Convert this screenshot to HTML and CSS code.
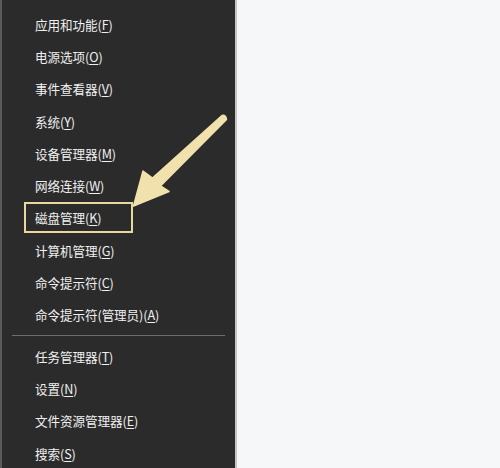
FILE: index.html
```html
<!DOCTYPE html>
<html lang="zh-CN">
<head>
  <meta charset="UTF-8">
  <title>快速链接菜单</title>
  <link rel="stylesheet" href="styles.css">
</head>
<body>
  <div class="screen">
    <ul class="menu">
      <li>应用和功能(<u>F</u>)</li>
      <li>电源选项(<u>O</u>)</li>
      <li>事件查看器(<u>V</u>)</li>
      <li>系统(<u>Y</u>)</li>
      <li>设备管理器(<u>M</u>)</li>
      <li>网络连接(<u>W</u>)</li>
      <li><span class="mark">磁盘管理(<u>K</u>)</span></li>
      <li>计算机管理(<u>G</u>)</li>
      <li>命令提示符(<u>C</u>)</li>
      <li>命令提示符(管理员)(<u>A</u>)</li>
      <li class="sep"></li>
      <li>任务管理器(<u>T</u>)</li>
      <li>设置(<u>N</u>)</li>
      <li>文件资源管理器(<u>E</u>)</li>
      <li>搜索(<u>S</u>)</li>
    </ul>
    <div class="blank"></div>

    <svg class="arrow" width="500" height="468" viewBox="0 0 500 468">
      <path d="M222 115.5 Q226 114.5 226.5 119.5 L160.5 186 L169 191.5 L133.5 206 L143 171 L152.5 178 Z"
            fill="#f1e2ad" stroke="#f1e2ad" stroke-width="1.5" stroke-linejoin="round"/>
    </svg>
  </div>
</body>
</html>
```

FILE: styles.css
```css
* { box-sizing: border-box; }
body {
  margin: 0;
  font-family: "Noto Sans CJK SC", "Noto Sans", sans-serif;
  background: #f6f7f9;
}
.screen {
  position: relative;
  display: flex;
  width: 500px;
  height: 468px;
  overflow: hidden;
}
.menu {
  list-style: none;
  margin: 0;
  padding: 8px 0 0 0;
  width: 237px;
  background: #2b2b2b;
  border-left: 2px solid #5a5a5a;
  border-right: 2px solid #c4c4c6;
}
.menu li {
  height: 32.3px;
  display: flex;
  align-items: center;
  padding-left: 33px;
  color: #f0f0f0;
  font-size: 12.6px;
  letter-spacing: -0.1px;
}
.menu u {
  text-underline-offset: 2px;
}
.menu li.sep {
  height: 1px;
  margin: 4px 10px 4px 10px;
  padding: 0;
  background: #6e6e6e;
}
.mark {
  display: inline-flex;
  align-items: center;
  height: 31px;
  margin-left: -11px;
  padding: 0 30px 0 9px;
  border: 2px solid #e6d89e;
}
.blank {
  flex: 1;
  background: #f6f7f9;
}
.arrow {
  position: absolute;
  left: 0;
  top: 0;
  pointer-events: none;
}
```
